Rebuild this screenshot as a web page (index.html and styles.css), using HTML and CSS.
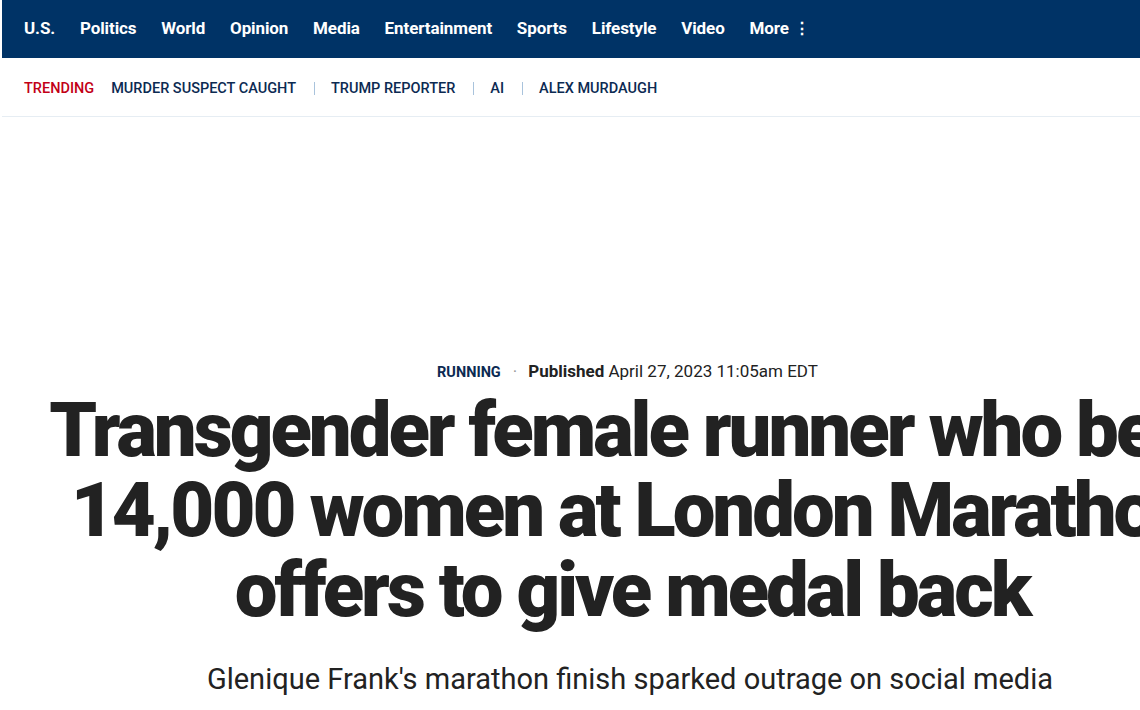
FILE: index.html
```html
<!DOCTYPE html>
<html>
<head>
<meta charset="utf-8">
<link rel="stylesheet" href="styles.css">
</head>
<body>
<div class="page">
  <header class="topnav">
    <nav class="nav">
      <a>U.S.</a><a>Politics</a><a>World</a><a>Opinion</a><a>Media</a><a>Entertainment</a><a>Sports</a><a>Lifestyle</a><a>Video</a><a class="more">More <span class="dots">&#8942;</span></a>
    </nav>
  </header>
  <div class="trending">
    <span class="label">TRENDING</span>
    <a>MURDER SUSPECT CAUGHT</a><span class="sep"></span>
    <a>TRUMP REPORTER</a><span class="sep"></span>
    <a>AI</a><span class="sep"></span>
    <a>ALEX MURDAUGH</a>
  </div>
  <div class="adspace"></div>
  <article class="article">
    <div class="meta">
      <span class="cat">RUNNING</span>
      <span class="bullet">&middot;</span>
      <span class="pub"><strong>Published</strong> April 27, 2023 11:05am EDT</span>
    </div>
    <h1 class="headline">Transgender female runner who beat 14,000 women at London Marathon offers to give medal back</h1>
    <h2 class="sub">Glenique Frank's marathon finish sparked outrage on social media</h2>
  </article>
</div>
</body>
</html>
```

FILE: styles.css
```css
html, body {
  margin: 0;
  padding: 0;
  background: #fff;
  overflow: hidden;
}
body {
  font-family: Roboto, "Liberation Sans", sans-serif;
  color: #212121;
}
.page {
  width: 1140px;
  overflow: hidden;
  border-left: 2px solid #fff;
  box-sizing: border-box;
}
.topnav {
  background: #003366;
  height: 58px;
  display: flex;
  align-items: center;
  box-sizing: border-box;
  padding-bottom: 2px;
}
.nav {
  display: flex;
  gap: 24.8px;
  padding-left: 22px;
}
.nav a {
  color: #fff;
  font-weight: 700;
  font-size: 17px;
  letter-spacing: -0.1px;
}
.dots {
  font-size: 16px;
  margin-left: 1px;
}
.trending {
  height: 59px;
  border-bottom: 1px solid #e6edf3;
  display: flex;
  align-items: center;
  padding-left: 22px;
  padding-top: 2px;
  box-sizing: border-box;
  font-size: 14.5px;
  font-weight: 500;
}
.trending .label {
  color: #c20017;
  margin-right: 17px;
}
.trending a {
  color: #0c2a52;
}
.trending .sep {
  width: 1px;
  height: 13px;
  background: #a9c3dc;
  margin: 0 16px 0 18px;
}
.adspace {
  height: 244px;
}
.article {
  width: 1260px;
  text-align: center;
}
.meta {
  display: flex;
  justify-content: center;
  align-items: baseline;
  height: 24px;
  margin-left: -9px;
}
.cat {
  font-size: 14.5px;
  font-weight: 700;
  color: #0c2a52;
}
.bullet {
  color: #999;
  margin: 0 11px 0 12px;
  font-size: 17px;
}
.pub {
  font-size: 17px;
  color: #222;
}
.pub strong {
  font-weight: 700;
}
.headline {
  margin: 5px auto 0;
  width: 1240px;
  font-size: 76px;
  line-height: 80px;
  font-weight: 900;
  color: #222;
  letter-spacing: -3px;
}
.sub {
  margin: 32px 0 0;
  margin-left: -4px;
  font-size: 29px;
  font-weight: 400;
  line-height: 34px;
  color: #222;
}
```
